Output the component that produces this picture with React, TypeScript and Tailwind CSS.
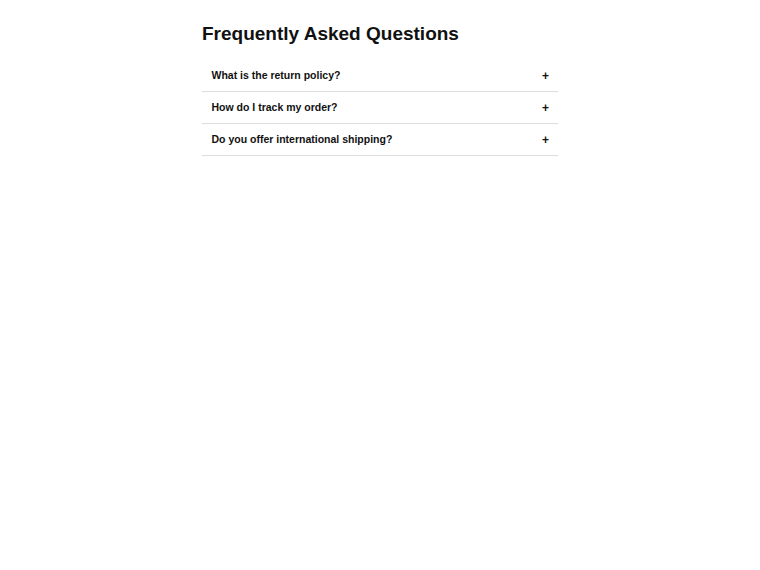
import React, { useState } from "react";

const items = [
  { q: "What is the return policy?", a: "You can return any item within 30 days of purchase." },
  { q: "How do I track my order?", a: "Use the tracking link in your confirmation email." },
  { q: "Do you offer international shipping?", a: "Yes, we ship to most countries worldwide." },
];

export default function App() {
  const [open, setOpen] = useState<number | null>(null);
  return (
    <div className="min-h-screen bg-white" style={{ fontFamily: '"Liberation Sans", Arial, sans-serif' }}>
      <div className="mx-auto w-[356px] pt-[21px]">
        <h1 className="text-[19px] font-bold leading-[26px] text-[#111]">Frequently Asked Questions</h1>
        <div className="mt-[13px]">
          {items.map((it, i) => (
            <div key={i} className="border-b border-[#ddd]">
              <button
                className="flex h-[31px] w-full items-center justify-between pl-[9.5px] pr-[9px] text-left text-[10.5px] font-bold leading-[15px] text-[#111]"
                onClick={() => setOpen(open === i ? null : i)}
              >
                <span>{it.q}</span>
                <span className="translate-y-[1px] text-[12px] leading-[15px]">{open === i ? "−" : "+"}</span>
              </button>
              {open === i && <div className="px-[10px] pb-[8px] text-[10.5px] text-[#333]">{it.a}</div>}
            </div>
          ))}
        </div>
      </div>
    </div>
  );
}
